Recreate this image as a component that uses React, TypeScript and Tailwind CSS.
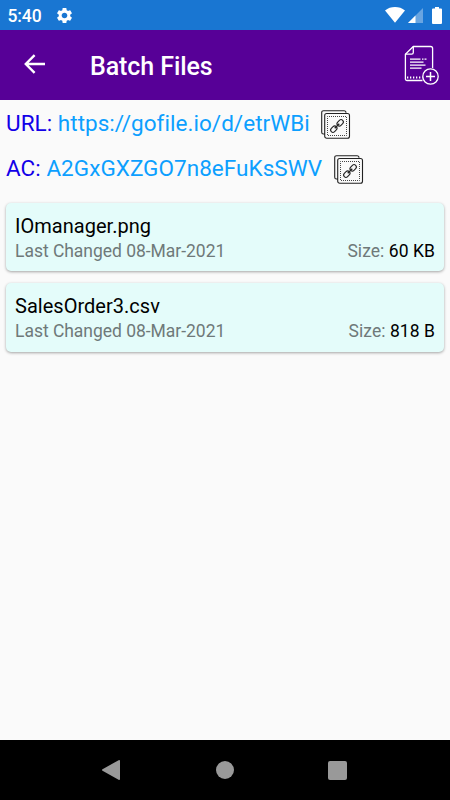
import { MdSettings } from "react-icons/md";

const links = [
  { label: "URL:", value: "https://gofile.io/d/etrWBi", width: "w-[304px]" },
  { label: "AC:", value: "A2GxGXZGO7n8eFuKsSWV", width: "w-[317px]" },
];

const files = [
  { name: "IOmanager.png", changed: "08-Mar-2021", size: "60 KB" },
  { name: "SalesOrder3.csv", changed: "08-Mar-2021", size: "818 B" },
];

function StatusBar() {
  return (
    <div className="flex h-[30px] shrink-0 items-center bg-[#1976d2] pl-[7.5px] pr-2 text-white">
      <span className="mt-[1px] text-[17.5px] font-medium leading-[30px] tracking-[-0.1px]">5:40</span>
      <MdSettings className="ml-[13px] size-[19px]" />
      <div className="ml-auto flex items-center">
        {/* wifi */}
        <svg width="20" height="16" viewBox="0 0 20 16" fill="currentColor">
          <path d="M0 3.4C5.6-1.1 14.4-1.1 20 3.4L10 15.8z" />
        </svg>
        {/* signal */}
        <svg className="ml-[3px]" width="15" height="15" viewBox="0 0 15 15" fill="currentColor">
          <path d="M15 0v15H0z" opacity="0.35" />
          <path d="M7.5 7.5V15H0z" />
        </svg>
        {/* battery */}
        <svg className="ml-[9px]" width="10" height="17" viewBox="0 0 10 17" fill="currentColor">
          <path d="M3 0h4v1.4h2a1 1 0 0 1 1 1V16a1 1 0 0 1-1 1H1a1 1 0 0 1-1-1V2.4a1 1 0 0 1 1-1h2z" />
        </svg>
      </div>
    </div>
  );
}

function AddFileIcon() {
  return (
    <svg width="36" height="40" viewBox="0 0 36 40" fill="none" stroke="white" strokeWidth="1.3">
      <path d="M18.5 35.5H3a1.6 1.6 0 0 1-1.6-1.6V9.2L9.3 1.5H26.6a2 2 0 0 1 2 2V23" />
      <path d="M9.3 1.5v6a1.7 1.7 0 0 1-1.7 1.7H1.4" />
      <path d="M6 14.1h10.5M18 14.1h1.5M20.5 14.1h2M6 17.2h13.5M6 20.2h15.5M6 23.2h11.5" />
      <path d="M3 32.6h15.5" strokeWidth="2" strokeDasharray="1.3 1.7" />
      <circle cx="26.5" cy="31.5" r="7.7" />
      <path d="M26.5 27v9M22 31.5h9" strokeWidth="1.5" />
    </svg>
  );
}

function CopyLinkIcon() {
  return (
    <svg width="30" height="30" viewBox="0 0 30 30" fill="none" stroke="#222" strokeWidth="1.1">
      <path d="M4 24H2.5A1.8 1.8 0 0 1 .7 22.2V2.5A1.8 1.8 0 0 1 2.5.7H23A2 2 0 0 1 25 2.7" />
      <rect x="3.7" y="3.5" width="24.8" height="24.8" rx="2" />
      <rect
        x="6.5"
        y="6.5"
        width="19"
        height="19"
        stroke="#444"
        strokeWidth="1"
        strokeDasharray="1 1"
        strokeDashoffset="0.5"
      />
      <g transform="rotate(-45 16 16)">
        <rect x="8" y="13.7" width="7" height="4.6" rx="2.3" />
        <rect x="17" y="13.7" width="7" height="4.6" rx="2.3" />
        <path d="M12.8 16h6.4" strokeWidth="1.3" />
      </g>
    </svg>
  );
}

export default function App() {
  return (
    <div className="flex h-[800px] w-[450px] flex-col bg-[#fafafa] font-['Roboto',sans-serif]">
      <StatusBar />

      {/* App bar */}
      <header className="flex h-[70px] shrink-0 items-center bg-[#570097] pl-[24px] pr-[10px] text-white">
        <button type="button" aria-label="Back" className="-mt-[2px]">
          <svg width="22" height="20" viewBox="0 0 22 20" fill="none" stroke="currentColor" strokeWidth="2.4">
            <path d="M21 10H2M10.6 1.2L1.8 10L10.6 18.8" />
          </svg>
        </button>
        <h1 className="ml-[44px] mt-[3px] text-[25px] font-medium leading-[30px] tracking-[-0.08px]">
          Batch Files
        </h1>
        <button type="button" aria-label="Add file" className="ml-auto">
          <AddFileIcon />
        </button>
      </header>

      <main className="flex-1">
        <div className="pt-[1px]">
          {links.map((link) => (
            <div key={link.label} className="flex h-[45px] items-start pl-[6px]">
              <p
                className={`${link.width} whitespace-pre text-[22.5px] leading-[45px] tracking-[0.04px] text-[#0c9fff]`}
              >
                <span className="text-[#1200e8]">{link.label} </span>
                {link.value}
              </p>
              <button type="button" aria-label={`Copy ${link.label}`} className="ml-[11px] mt-[9px]">
                <CopyLinkIcon />
              </button>
            </div>
          ))}
        </div>

        {/* File list */}
        <ul className="mt-[11.5px] flex flex-col gap-3 px-[6px]">
          {files.map((file) => (
            <li
              key={file.name}
              className="h-[68.5px] rounded-[5px] bg-[#e4fcfa] px-[9px] pt-[11px] shadow-[0_1px_3px_rgba(0,0,0,0.35)]"
            >
              <p className="text-[20px] leading-[25px] tracking-[0.02px] text-black">{file.name}</p>
              <div className="flex justify-between text-[17.5px] leading-[25.5px] text-[#6f7979]">
                <span className="tracking-[-0.03px]">Last Changed {file.changed}</span>
                <span className="tracking-[0.06px]">
                  Size: <span className="text-black">{file.size}</span>
                </span>
              </div>
            </li>
          ))}
        </ul>
      </main>

      {/* Navigation bar */}
      <nav className="flex h-[60px] shrink-0 items-center bg-black pl-[102px] text-[#999]">
        <svg width="18" height="20" viewBox="0 0 18 20" fill="currentColor">
          <path d="M16.6.2a1 1 0 0 1 1.4.9v17.8a1 1 0 0 1-1.4.9L.5 10.8a.9.9 0 0 1 0-1.6z" />
        </svg>
        <span className="ml-[96px] size-[18px] rounded-full bg-[#999]" />
        <span className="ml-[94px] size-[19px] rounded-[2px] bg-[#999]" />
      </nav>
    </div>
  );
}
